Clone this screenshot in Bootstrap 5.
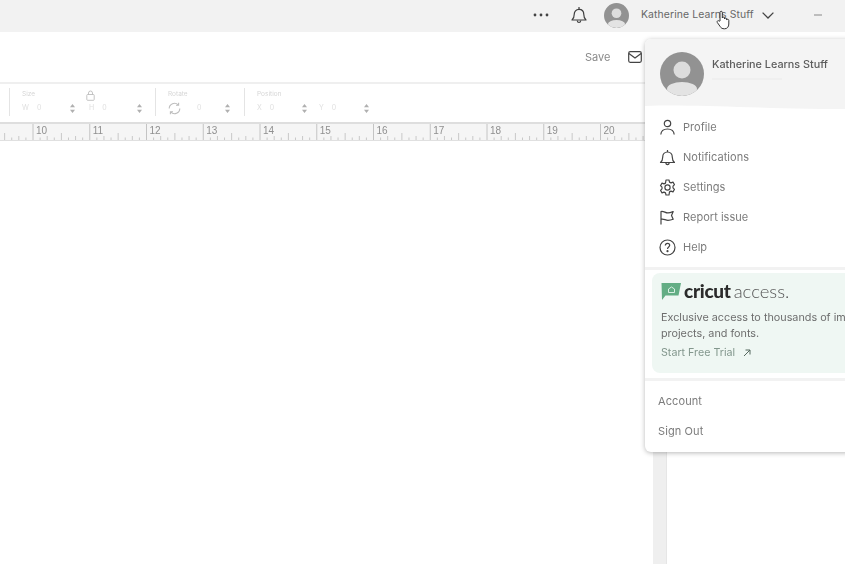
<!DOCTYPE html>
<html lang="en">
<head>
  <meta charset="UTF-8" />
  <meta name="viewport" content="width=device-width, initial-scale=1.0"/>
  <link href="https://cdn.jsdelivr.net/npm/bootstrap@5.3.1/dist/css/bootstrap.min.css" rel="stylesheet"/>
  <title>Design Space</title>
  <style>
    html, body { height: 100%; }
    body {
      width: 845px; height: 564px; overflow: hidden; position: relative;
      font-family: Inter, "Noto Sans", sans-serif; color: #6a6a6a; background: #fff;
      filter: blur(.35px);
    }
    svg { display: block; flex: none; }

    .top-bar { height: 32px; background: #f2f2f2; font-size: 10.4px; padding-left: 533px; padding-bottom: 2px; }
    .top-dots { width: 16px; }
    .top-bell { margin-left: 22px; }
    .top-avatar { margin-left: 17px; }
    .top-name { margin-left: 12px; width: 114px; white-space: nowrap; color: #676767; letter-spacing: .12px; }
    .top-chevron { margin-left: 7px; }
    .top-min { margin-left: 40px; }

    .save-row { height: 52px; border-bottom: 2px solid #efefef; padding-left: 585px; font-size: 11px; color: #8a8a8a; }
    .save-row svg { margin-left: 18px; }

    .work-area { height: 480px; }
    .canvas-col { width: 653px; flex: none; }
    .side-strip { width: 14px; flex: none; background: #efefef; border-right: 1px solid #e6e6e6; }

    .edit-bar { height: 38px; padding-left: 9px; padding-top: 4px; padding-bottom: 6px; }
    .edit-group { border-left: 1px solid #e4e4e4; height: 28px; padding-left: 12px; padding-top: 2px; font-size: 6.5px; color: #d6d6d6; }
    .edit-label { height: 9px; line-height: 9px; }
    .edit-fields { height: 19px; }
    .edit-field { width: 53px; height: 16px; font-size: 7px; color: #e0e0e0; }
    .edit-field svg { margin-left: auto; }
    .group-size { width: 146px; }
    .group-rotate { width: 89px; }
    .group-size .edit-field + .edit-field { margin-left: 14px; }
    .group-pos .edit-field + .edit-field { margin-left: 12px; }
    .group-pos .edit-field { width: 50px; }
    .rotate-field { width: 100%; padding-right: 14px; }
    .rotate-field svg:first-child { margin-left: 0; }
    .lock-icon { position: absolute; left: 76px; top: 2px; }

    .ruler { height: 19px; background: #f5f5f5; border-top: 2px solid #dedede; border-bottom: 1px solid #e0e0e0; }
    .ruler text { font-family: "Liberation Sans", sans-serif; font-size: 10px; fill: #8f8f8f; }

    .user-menu {
      position: absolute; left: 645px; top: 39px; width: 230px; height: 413px;
      background: #fff; border-radius: 6px; overflow: hidden;
      box-shadow: 0 1px 5px rgba(0,0,0,.28);
    }
    .menu-head { height: 73px; background: #f4f4f4; position: relative; padding-left: 15px; padding-top: 13px; }
    .menu-head-wave { position: absolute; left: 0; bottom: 0; }
    .menu-name { font-size: 10.8px; font-weight: 500; color: #5c5c5c; margin-top: 5px; white-space: nowrap; }
    .menu-sub { width: 70px; height: 2px; background: #efefef; margin-top: 5px; }
    .menu-head-text { margin-left: 8px; }
    .menu-list { padding-left: 14px; }
    .menu-item { height: 30px; font-size: 11px; color: #7c7c7c; gap: 7px; letter-spacing: .03px; }
    .menu-rule { height: 3px; background: #f2f2f2; margin-top: 5px; }
    .access-card { background: #eff7f3; margin: 3px 0 5px 7px; height: 100px; border-radius: 8px; padding: 8px 0 0 9px; }
    .access-logo { gap: 3px; height: 20px; }
    .access-word { font-family: Lato, sans-serif; font-weight: 900; font-size: 19px; line-height: 20px; color: #2b2b2b; letter-spacing: -.3px; }
    .access-thin { font-family: Lato, sans-serif; font-weight: 300; font-size: 18.5px; line-height: 20px; color: #555; }
    .access-text { font-size: 10.8px; line-height: 16px; color: #6d6d6d; margin-top: 9px; white-space: nowrap; }
    .access-link { font-size: 10.7px; color: #83978d; margin-top: 3px; }
    .menu-foot { padding: 5px 0 0 13px; }
    .foot-item { height: 30px; font-size: 11px; color: #7c7c7c; letter-spacing: .1px; }
    .hand-cursor { position: absolute; left: 716px; top: 10px; }
  </style>
</head>
<body>
  <div class="top-bar d-flex align-items-center">
    <svg class="top-dots" width="16" height="4" viewBox="0 0 16 4"><circle cx="2" cy="2" r="1.4" fill="#444"/><circle cx="8" cy="2" r="1.4" fill="#444"/><circle cx="14" cy="2" r="1.4" fill="#444"/></svg>
    <svg class="top-bell" width="16" height="18" viewBox="0 0 16 18" fill="none" stroke="#3f3f3f" stroke-width="1.2" stroke-linejoin="round"><path d="M1 14c1.800-1.500 2.200-3 2.200-5.500C3.200 5.500 5 3.300 8 3.300s4.800 2.200 4.800 5.200c0 2.500.4 4 2.200 5.500z"/><path d="M8 1v2.300M6.200 14.500c.2 1.300 1 2 1.800 2s1.600-.7 1.800-2"/></svg>
    <svg class="top-avatar" width="25" height="25" viewBox="0 0 44 44"><defs><clipPath id="av1"><circle cx="22" cy="22" r="22"/></clipPath></defs><circle cx="22" cy="22" r="22" fill="#929292"/><circle cx="22" cy="18" r="8.500" fill="#dcdcdc"/><ellipse cx="22" cy="37" rx="15" ry="7" fill="#e3e3e3" clip-path="url(#av1)"/></svg>
    <span class="top-name">Katherine Learns Stuff</span>
    <svg class="top-chevron" width="12" height="7" viewBox="0 0 12 7" fill="none" stroke="#444" stroke-width="1.300"><path d="M.6.6 6 6l5.400-5.400"/></svg>
    <svg class="top-min" width="8" height="2" viewBox="0 0 8 2"><path d="M0 1h8" stroke="#888" stroke-width="1"/></svg>
  </div>

  <div class="save-row d-flex align-items-center">
    <span>Save</span>
    <svg width="14" height="12" viewBox="0 0 14 12" fill="none" stroke="#444" stroke-width="1.200"><rect x=".7" y=".7" width="12.600" height="10.600" rx="1.500"/><path d="M.9 2.500 7 7l6.100-4.500"/></svg>
  </div>

  <div class="work-area d-flex">
    <div class="canvas-col">
      <div class="edit-bar d-flex">
        <div class="edit-group group-size position-relative">
          <div class="edit-label">Size</div>
          <svg class="lock-icon" width="9" height="11" viewBox="0 0 9 11" fill="none" stroke="#b5b5b5" stroke-width=".8"><rect x=".8" y="4.500" width="7.400" height="5.800" rx=".8"/><path d="M2.500 4.500V3a2 2 0 0 1 4 0v1.500"/></svg>
          <div class="edit-fields d-flex align-items-center">
            <div class="edit-field d-flex align-items-center gap-2"><span>W</span><span>0</span><svg width="5" height="9" viewBox="0 0 5 9" fill="#b0b0b0"><path d="M2.500 0 5 3.300H0zM2.500 9 0 5.700h5z"/></svg></div>
            <div class="edit-field d-flex align-items-center gap-2"><span>H</span><span>0</span><svg width="5" height="9" viewBox="0 0 5 9" fill="#b0b0b0"><path d="M2.500 0 5 3.300H0zM2.500 9 0 5.700h5z"/></svg></div>
          </div>
        </div>
        <div class="edit-group group-rotate">
          <div class="edit-label">Rotate</div>
          <div class="edit-fields d-flex align-items-center">
            <div class="edit-field rotate-field d-flex align-items-center gap-3">
              <svg width="13" height="13" viewBox="0 0 13 13" fill="none" stroke="#bdbdbd" stroke-width="1.100"><path d="M1.200 6.500a5.300 5.300 0 0 1 9-3.700M11.800 6.500a5.300 5.300 0 0 1-9 3.700"/><path d="M10.600.8v2.500H8M2.400 12.200V9.700H5"/></svg>
              <span>0</span>
              <svg width="5" height="9" viewBox="0 0 5 9" fill="#b0b0b0"><path d="M2.500 0 5 3.300H0zM2.500 9 0 5.700h5z"/></svg>
            </div>
          </div>
        </div>
        <div class="edit-group group-pos">
          <div class="edit-label">Position</div>
          <div class="edit-fields d-flex align-items-center">
            <div class="edit-field d-flex align-items-center gap-2"><span>X</span><span>0</span><svg width="5" height="9" viewBox="0 0 5 9" fill="#b0b0b0"><path d="M2.500 0 5 3.300H0zM2.500 9 0 5.700h5z"/></svg></div>
            <div class="edit-field d-flex align-items-center gap-2"><span>Y</span><span>0</span><svg width="5" height="9" viewBox="0 0 5 9" fill="#b0b0b0"><path d="M2.500 0 5 3.300H0zM2.500 9 0 5.700h5z"/></svg></div>
          </div>
        </div>
      </div>
      <div class="ruler"><svg id="rulerSvg" width="653" height="16"></svg></div>
    </div>
    <div class="side-strip"></div>
  </div>

  <div class="user-menu">
    <div class="menu-head d-flex align-items-start">
      <svg width="44" height="44" viewBox="0 0 44 44"><defs><clipPath id="av2"><circle cx="22" cy="22" r="22"/></clipPath></defs><circle cx="22" cy="22" r="22" fill="#929292"/><circle cx="22" cy="18" r="8.500" fill="#dcdcdc"/><ellipse cx="22" cy="37" rx="15" ry="7" fill="#e3e3e3" clip-path="url(#av2)"/></svg>
      <div class="menu-head-text">
        <div class="menu-name">Katherine Learns Stuff</div>
        <div class="menu-sub"></div>
      </div>
      <svg class="menu-head-wave" width="230" height="8" viewBox="0 0 230 8"><path d="M0 2C60 0 120 6 230 5V8H0z" fill="#fff"/></svg>
    </div>
    <div class="menu-list">
      <div class="menu-item d-flex align-items-center">
        <svg width="17" height="17" viewBox="0 0 17 17" fill="none" stroke="#444" stroke-width="1.200"><circle cx="8.500" cy="4.500" r="3.200"/><path d="M1.800 15.500c.3-3.500 2.800-5.500 6.700-5.500s6.400 2 6.700 5.500"/></svg>
        <span>Profile</span>
      </div>
      <div class="menu-item d-flex align-items-center">
        <svg width="17" height="17" viewBox="0 0 17 17" fill="none" stroke="#444" stroke-width="1.200" stroke-linejoin="round"><path d="M1.500 13.500c1.800-1.500 2.200-3 2.200-5.300 0-3 2-5.200 4.800-5.200s4.800 2.200 4.800 5.200c0 2.300.4 3.800 2.200 5.300z"/><path d="M8.500 1v2M6.700 13.700c.2 1.300 1 2 1.800 2s1.600-.7 1.800-2"/></svg>
        <span>Notifications</span>
      </div>
      <div class="menu-item d-flex align-items-center">
        <svg width="17" height="17" viewBox="0 0 17 17" fill="none" stroke="#444" stroke-width="1.200" stroke-linejoin="round"><circle cx="8.500" cy="8.500" r="2.600"/><path d="M7 1h3l.5 2.100 1.500.8 2-.8 1.500 2.600-1.500 1.500v1.600l1.500 1.500-1.500 2.600-2-.8-1.500.8L10 16H7l-.5-2.100-1.500-.8-2 .8-1.500-2.600 1.500-1.500V8.200L1.500 6.700 3 4.100l2 .8 1.500-.8z"/></svg>
        <span>Settings</span>
      </div>
      <div class="menu-item d-flex align-items-center">
        <svg width="17" height="17" viewBox="0 0 17 17" fill="none" stroke="#444" stroke-width="1.200" stroke-linejoin="round"><path d="M2 15.500V2.500c2.800-.8 4.300 1.600 7 1.400 1.800-.1 3.600-.8 5.200-1.400L12.500 6.500l1.700 3.800c-1.600.6-3.400 1-5.200 1-2.700 0-4.200-1.700-7-1"/></svg>
        <span>Report issue</span>
      </div>
      <div class="menu-item d-flex align-items-center">
        <svg width="17" height="17" viewBox="0 0 17 17" fill="none" stroke="#444" stroke-width="1.200"><circle cx="8.500" cy="8.500" r="7.500"/><path d="M6.300 6.500c.1-1.300 1-2.100 2.200-2.100s2.200.8 2.200 1.900c0 1.700-2.200 1.700-2.200 3.700"/><circle cx="8.500" cy="12.200" r=".5" fill="#444"/></svg>
        <span>Help</span>
      </div>
    </div>
    <div class="menu-rule"></div>
    <div class="access-card">
      <div class="access-logo d-flex align-items-center">
        <svg width="20" height="18" viewBox="0 0 20 18"><path d="M.5 1H20l-2.500 12.500H4.500L1 18z" fill="#63ad84"/><path d="M7.500 10.500V7L10.500 5l3 2v3.500z" fill="none" stroke="#d9efe3" stroke-width="1"/></svg>
        <span class="access-word">cricut</span><span class="access-thin">access.</span>
      </div>
      <div class="access-text">Exclusive access to thousands of images,<br>projects, and fonts.</div>
      <div class="access-link d-flex align-items-center gap-2">Start Free Trial
        <svg width="8" height="8" viewBox="0 0 8 8" fill="none" stroke="#55685e" stroke-width="1"><path d="M1 7 7 1M2.500 1H7v4.500"/></svg>
      </div>
    </div>
    <div class="menu-rule m-0"></div>
    <div class="menu-foot">
      <div class="foot-item d-flex align-items-center">Account</div>
      <div class="foot-item d-flex align-items-center">Sign Out</div>
    </div>
  </div>

  <svg class="hand-cursor" width="15" height="20" viewBox="0 0 15 20" fill="#fff" stroke="#333" stroke-width="1" stroke-linejoin="round"><path d="M4 11V2.500C4 .8 6.300.8 6.300 2.500V8c0-1.200 2.200-1.200 2.200 0v1c0-1.200 2.200-1.200 2.200 0v1c0-1.100 2.100-1.100 2.100.3v3.700c0 2.800-1.600 4.800-4.300 4.800-2.300 0-3.500-.8-4.500-2.500L1.300 12.500c-.8-1.500 1-2.500 2-1.300z"/></svg>

  <script>
    // ruler ticks, one labelled tick per unit
    const rulerSvg = document.getElementById('rulerSvg');
    const unit = 56.75;
    let marks = '';
    for (let i = -1; i < 11; i++) {
      const x = 33 + i * unit;
      if (i >= 0) {
        marks += `<path d="M${x} 0V16" stroke="#c4c4c4" stroke-width="1"/>`;
        marks += `<text x="${x + 3}" y="10">${10 + i}</text>`;
      }
      for (let t = 1; t < 8; t++) {
        const h = t === 4 ? 7 : (t % 2 === 0 ? 4 : 2.5);
        const tx = x + t * unit / 8;
        marks += `<path d="M${tx} ${16 - h}V16" stroke="#c8c8c8" stroke-width="1"/>`;
      }
    }
    rulerSvg.innerHTML = marks;
  </script>
  <script src="https://cdn.jsdelivr.net/npm/bootstrap@5.3.1/dist/js/bootstrap.bundle.min.js"></script>
</body>
</html>
